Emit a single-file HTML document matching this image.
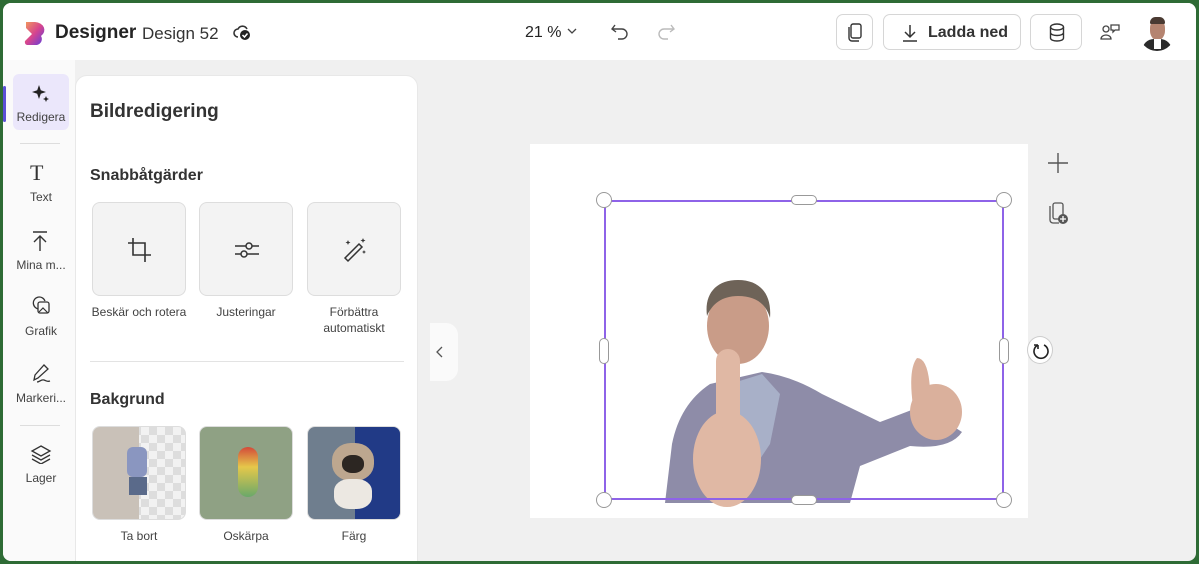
<!DOCTYPE html>
<html><head><meta charset="utf-8"><style>
*{box-sizing:border-box;margin:0;padding:0}
body{width:1199px;height:564px;background:#2e6b35;font-family:"Liberation Sans",sans-serif;color:#242424;overflow:hidden;position:relative}
.win{position:absolute;left:3px;top:3px;width:1193px;height:558px;background:#f0f0f0;border-radius:8px;overflow:hidden}
.top{position:absolute;left:0;top:0;width:100%;height:57px;background:#fff}
.abs{position:absolute}
.side{position:absolute;left:0;top:57px;width:72px;height:501px;background:#fafafa}
.panel{position:absolute;left:72px;top:72px;width:343px;height:500px;background:#fff;border-radius:12px;border:1px solid #e8e8e8}
.nav{position:absolute;width:56px;text-align:center;font-size:12px;color:#424242}
.tile{position:absolute;width:94px;height:94px;background:#f3f3f3;border:1px solid #ddd;border-radius:8px}
.lbl{position:absolute;width:120px;text-align:center;font-size:12px;color:#424242;line-height:16px}
.btn{position:absolute;top:11px;height:36px;border:1px solid #d6d6d6;border-radius:7px;background:#fff}
.cir{position:absolute;width:16px;height:16px;border:1px solid #999;border-radius:50%;background:#fff}
</style></head><body>
<div class="win">
<div class="top">
 <svg class="abs" style="left:20px;top:17px" width="24" height="26" viewBox="0 0 24 26"><defs><linearGradient id="g" x1="0" y1="0" x2="1" y2="1"><stop offset="0" stop-color="#f29a5a"/><stop offset=".5" stop-color="#d6448f"/><stop offset="1" stop-color="#5b3de0"/></linearGradient></defs><path d="M3 2h9a10 8 0 0 1 6 14a6 6 0 0 1-4 9H4a3 3 0 0 1-2-4l7-7L3 8z" fill="url(#g)"/></svg>
 <div class="abs" style="left:52px;top:19px;font-size:19px;font-weight:bold">Designer</div>
 <div class="abs" style="left:139px;top:21px;font-size:17px;color:#333">Design 52</div>
 <svg class="abs" style="left:230px;top:21px" width="20" height="18" viewBox="0 0 20 18"><path d="M5 13a4 4 0 0 1 0-8a5 5 0 0 1 9 0" fill="none" stroke="#333" stroke-width="1.6"/><circle cx="12" cy="11" r="5" fill="#222"/><path d="M9.5 11l2 2 3-3.5" stroke="#fff" stroke-width="1.5" fill="none"/></svg>
 <div class="abs" style="left:522px;top:21px;font-size:16px">21 %</div>
 <svg class="abs" style="left:563px;top:24px" width="12" height="8"><path d="M2 2l4 4 4-4" stroke="#444" fill="none" stroke-width="1.3"/></svg>
 <svg class="abs" style="left:607px;top:19px" width="20" height="18"><path d="M5 3L2 7l4 3M2 7h10a5 5 0 0 1 0 10H8" stroke="#444" fill="none" stroke-width="1.4"/></svg>
 <svg class="abs" style="left:653px;top:19px" width="20" height="18"><path d="M15 3l3 4-4 3M18 7H8a5 5 0 0 0 0 10h4" stroke="#bbb" fill="none" stroke-width="1.4"/></svg>
 <div class="btn" style="left:833px;width:37px"><svg class="abs" style="left:10px;top:8px" width="16" height="20"><rect x="4" y="1" width="10" height="14" rx="2" fill="none" stroke="#333" stroke-width="1.4"/><path d="M2 4v11a3 3 0 0 0 3 3h7" fill="none" stroke="#333" stroke-width="1.4"/></svg></div>
 <div class="btn" style="left:880px;width:138px"><svg class="abs" style="left:17px;top:9px" width="18" height="18"><path d="M9 1v12M4 8l5 5 5-5M2 17h14" stroke="#333" fill="none" stroke-width="1.5"/></svg><div class="abs" style="left:44px;top:9px;font-size:16px;font-weight:bold;color:#333">Ladda ned</div></div>
 <div class="btn" style="left:1027px;width:52px"><svg class="abs" style="left:17px;top:8px" width="18" height="20"><ellipse cx="9" cy="4" rx="6.5" ry="3" fill="none" stroke="#333" stroke-width="1.4"/><path d="M2.5 4v11c0 4 13 4 13 0V4M2.5 9.5c0 4 13 4 13 0" fill="none" stroke="#333" stroke-width="1.4"/></svg></div>
 <svg class="abs" style="left:1097px;top:19px" width="22" height="20"><circle cx="6" cy="7" r="3" fill="none" stroke="#444" stroke-width="1.3"/><path d="M1 17a5 4 0 0 1 10 0z" fill="none" stroke="#444" stroke-width="1.3"/><path d="M11 3h8v5h-4l-2 2V8h-2z" fill="none" stroke="#444" stroke-width="1.3"/></svg>
 <div class="abs" style="left:1136px;top:11px;width:36px;height:37px;border-radius:50%;background:#fff;overflow:hidden"><div class="abs" style="left:11px;top:5px;width:15px;height:21px;border-radius:45%;background:#b58470"></div><div class="abs" style="left:11px;top:3px;width:15px;height:7px;border-radius:8px 8px 2px 2px;background:#4a3a32"></div><div class="abs" style="left:3px;top:25px;width:30px;height:16px;border-radius:12px 12px 0 0;background:#2b2b2b"></div><div class="abs" style="left:15px;top:25px;width:7px;height:10px;background:#fff"></div></div>
</div>
<div class="side">
 <div class="abs" style="left:0;top:26px;width:3px;height:36px;background:#5b4fd6;border-radius:2px"></div>
 <div class="abs" style="left:10px;top:14px;width:56px;height:56px;background:#ebe7fb;border-radius:6px"></div>
 <svg class="abs" style="left:28px;top:24px" width="20" height="20"><path d="M8 1l1.8 5.2L15 8l-5.2 1.8L8 15l-1.8-5.2L1 8l5.2-1.8z" fill="#222"/><path d="M15 12l.9 2.1 2.1.9-2.1.9-.9 2.1-.9-2.1-2.1-.9 2.1-.9z" fill="#222"/></svg>
 <div class="nav" style="left:10px;top:50px">Redigera</div>
 <div class="abs" style="left:17px;top:83px;width:40px;height:1px;background:#ddd"></div>
 <div class="abs" style="left:27px;top:100px;font-size:22px;font-family:'Liberation Serif',serif;color:#333">T</div>
 <div class="nav" style="left:10px;top:130px">Text</div>
 <svg class="abs" style="left:28px;top:170px" width="18" height="22"><path d="M2 2h14M9 21V6M3 12l6-6 6 6" fill="none" stroke="#333" stroke-width="1.4"/></svg>
 <div class="nav" style="left:8px;top:198px;width:60px">Mina m...</div>
 <svg class="abs" style="left:28px;top:236px" width="20" height="20"><path d="M8 13a6 6 0 1 1 6-8" fill="none" stroke="#333" stroke-width="1.3"/><rect x="7" y="6" width="11" height="11" rx="2" fill="#fafafa" stroke="#333" stroke-width="1.3"/><path d="M8 16l4-4 5 5" fill="none" stroke="#333" stroke-width="1.2"/></svg>
 <div class="nav" style="left:10px;top:264px">Grafik</div>
 <svg class="abs" style="left:28px;top:303px" width="22" height="22"><path d="M3 17l1-5 9-10 4 4-10 9z M6 19c3 0 4-3 7-2s3 2 6 1" fill="none" stroke="#333" stroke-width="1.3"/></svg>
 <div class="nav" style="left:8px;top:331px;width:60px">Markeri...</div>
 <div class="abs" style="left:17px;top:365px;width:40px;height:1px;background:#ddd"></div>
 <svg class="abs" style="left:27px;top:384px" width="22" height="20"><path d="M11 2l9 5-9 5-9-5z" fill="none" stroke="#333" stroke-width="1.3"/><path d="M2 11l9 5 9-5M2 15l9 5 9-5" fill="none" stroke="#333" stroke-width="1.3"/></svg>
 <div class="nav" style="left:10px;top:411px">Lager</div>
</div>
<div class="panel">
 <div class="abs" style="left:14px;top:25px;font-size:19px;font-weight:bold;color:#333">Bildredigering</div>
 <div class="abs" style="left:14px;top:91px;font-size:16px;font-weight:bold;color:#333">Snabbåtgärder</div>
 <div class="tile" style="left:16px;top:126px"><svg class="abs" style="left:34px;top:34px" width="26" height="26"><path d="M6 1v17h18M1 6h17v19" fill="none" stroke="#333" stroke-width="1.6"/></svg></div>
 <div class="tile" style="left:123px;top:126px"><svg class="abs" style="left:34px;top:34px" width="26" height="26"><path d="M1 9h24M1 17h24" stroke="#333" stroke-width="1.5"/><circle cx="15" cy="9" r="3" fill="#f3f3f3" stroke="#333" stroke-width="1.5"/><circle cx="10" cy="17" r="3" fill="#f3f3f3" stroke="#333" stroke-width="1.5"/></svg></div>
 <div class="tile" style="left:231px;top:126px"><svg class="abs" style="left:34px;top:34px" width="26" height="26"><path d="M3 23l14-14 3 3-14 14z" fill="none" stroke="#333" stroke-width="1.5" transform="translate(0,-2)"/><path d="M6 3l.7 1.8L8.5 5.5l-1.8.7L6 8l-.7-1.8L3.5 5.5l1.8-.7zM21 1l.7 1.8 1.8.7-1.8.7L21 6l-.7-1.8-1.8-.7 1.8-.7zM22 13l.6 1.4 1.4.6-1.4.6L22 17l-.6-1.4-1.4-.6 1.4-.6z" fill="#333"/></svg></div>
 <div class="lbl" style="left:3px;top:228px">Beskär och rotera</div>
 <div class="lbl" style="left:110px;top:228px">Justeringar</div>
 <div class="lbl" style="left:218px;top:228px">Förbättra<br>automatiskt</div>
 <div class="abs" style="left:14px;top:285px;width:314px;height:1px;background:#e3e3e3"></div>
 <div class="abs" style="left:14px;top:315px;font-size:16px;font-weight:bold;color:#333">Bakgrund</div>
 <div class="tile" style="left:16px;top:350px;overflow:hidden;background:repeating-conic-gradient(#ddd 0 25%,#f2f2f2 0 50%) 0 0/16px 16px"><div class="abs" style="left:0;top:0;width:46px;height:94px;background:#c9c1b8"></div><div class="abs" style="left:34px;top:20px;width:20px;height:30px;background:#8a96c0;border-radius:6px"></div><div class="abs" style="left:36px;top:50px;width:18px;height:18px;background:#5a6a8a"></div></div>
 <div class="tile" style="left:123px;top:350px;overflow:hidden;background:#8fa184"><div class="abs" style="left:38px;top:20px;width:20px;height:50px;border-radius:10px;background:linear-gradient(#d34a3a,#e5c84a 40%,#6aa86a)"></div></div>
 <div class="tile" style="left:231px;top:350px;overflow:hidden;background:#6f7e8e"><div class="abs" style="left:47px;top:0;width:47px;height:94px;background:#213a86"></div><div class="abs" style="left:24px;top:16px;width:42px;height:38px;border-radius:45%;background:#bda78f"></div><div class="abs" style="left:34px;top:28px;width:22px;height:18px;border-radius:45%;background:#2c2622"></div><div class="abs" style="left:26px;top:52px;width:38px;height:30px;border-radius:40%;background:#ece8e2"></div></div>
 <div class="lbl" style="left:3px;top:452px">Ta bort</div>
 <div class="lbl" style="left:110px;top:452px">Oskärpa</div>
 <div class="lbl" style="left:218px;top:452px">Färg</div>
</div>
<div class="abs" style="left:427px;top:320px;width:28px;height:58px;background:#fafafa;border-radius:0 12px 12px 0"></div>
<svg class="abs" style="left:432px;top:342px" width="10" height="14"><path d="M7 2L2 7l5 5" stroke="#555" fill="none" stroke-width="1.3"/></svg>
<div class="abs" style="left:527px;top:141px;width:498px;height:374px;background:#fff"></div>
<svg class="abs" style="left:527px;top:141px" width="498" height="374" viewBox="0 0 498 374">
 <path d="M135 359L142 300Q150 260 180 240L232 228Q262 232 292 250L350 278L392 262L432 288Q420 306 380 302L330 322L320 359Z" fill="#8e8ca8"/>
 <path d="M200 240L232 230L250 250L240 300L220 330Z" fill="#a8b0c8"/>
 <ellipse cx="208" cy="182" rx="31" ry="38" fill="#c99c88"/>
 <path d="M177 172C174 150 186 136 208 136C230 136 242 150 240 174C236 160 226 152 208 152C192 152 182 160 177 172Z" fill="#6e6358"/>
 <ellipse cx="197" cy="315" rx="34" ry="48" fill="#e0b8a4"/>
 <rect x="186" y="205" width="24" height="80" rx="12" fill="#e0b8a4"/>
 <ellipse cx="406" cy="268" rx="26" ry="28" fill="#dab09c"/>
 <path d="M383 262Q378 225 387 214Q398 214 400 245Z" fill="#dab09c"/>
</svg>
<div class="abs" style="left:601px;top:197px;width:400px;height:300px;border:2px solid #8e63e8"></div>
<div class="cir" style="left:593px;top:189px"></div><div class="cir" style="left:993px;top:189px"></div>
<div class="cir" style="left:593px;top:489px"></div><div class="cir" style="left:993px;top:489px"></div>
<div class="abs" style="left:788px;top:192px;width:26px;height:10px;border:1px solid #999;border-radius:5px;background:#fff"></div>
<div class="abs" style="left:788px;top:492px;width:26px;height:10px;border:1px solid #999;border-radius:5px;background:#fff"></div>
<div class="abs" style="left:596px;top:335px;width:10px;height:26px;border:1px solid #999;border-radius:5px;background:#fff"></div>
<div class="abs" style="left:996px;top:335px;width:10px;height:26px;border:1px solid #999;border-radius:5px;background:#fff"></div>
<div class="abs" style="left:1024px;top:333px;width:26px;height:28px;border-radius:50%;background:#fff;border:1px solid #ccc"></div>
<svg class="abs" style="left:1028px;top:338px" width="20" height="20"><path d="M7 4a7 7 0 1 0 6 0M7 4v4M7 4H3" fill="none" stroke="#222" stroke-width="1.6"/></svg>
<svg class="abs" style="left:1043px;top:148px" width="24" height="24"><path d="M12 2v20M2 12h20" stroke="#555" stroke-width="1.4"/></svg>
<svg class="abs" style="left:1045px;top:198px" width="24" height="26"><rect x="5" y="2" width="10" height="16" rx="2" fill="none" stroke="#555" stroke-width="1.3"/><path d="M2 5v14a3 3 0 0 0 3 3h6" fill="none" stroke="#555" stroke-width="1.3"/><circle cx="15" cy="18" r="5" fill="#555"/><path d="M15 15v6M12 18h6" stroke="#fff" stroke-width="1.3"/></svg>
</div>
</body></html>
